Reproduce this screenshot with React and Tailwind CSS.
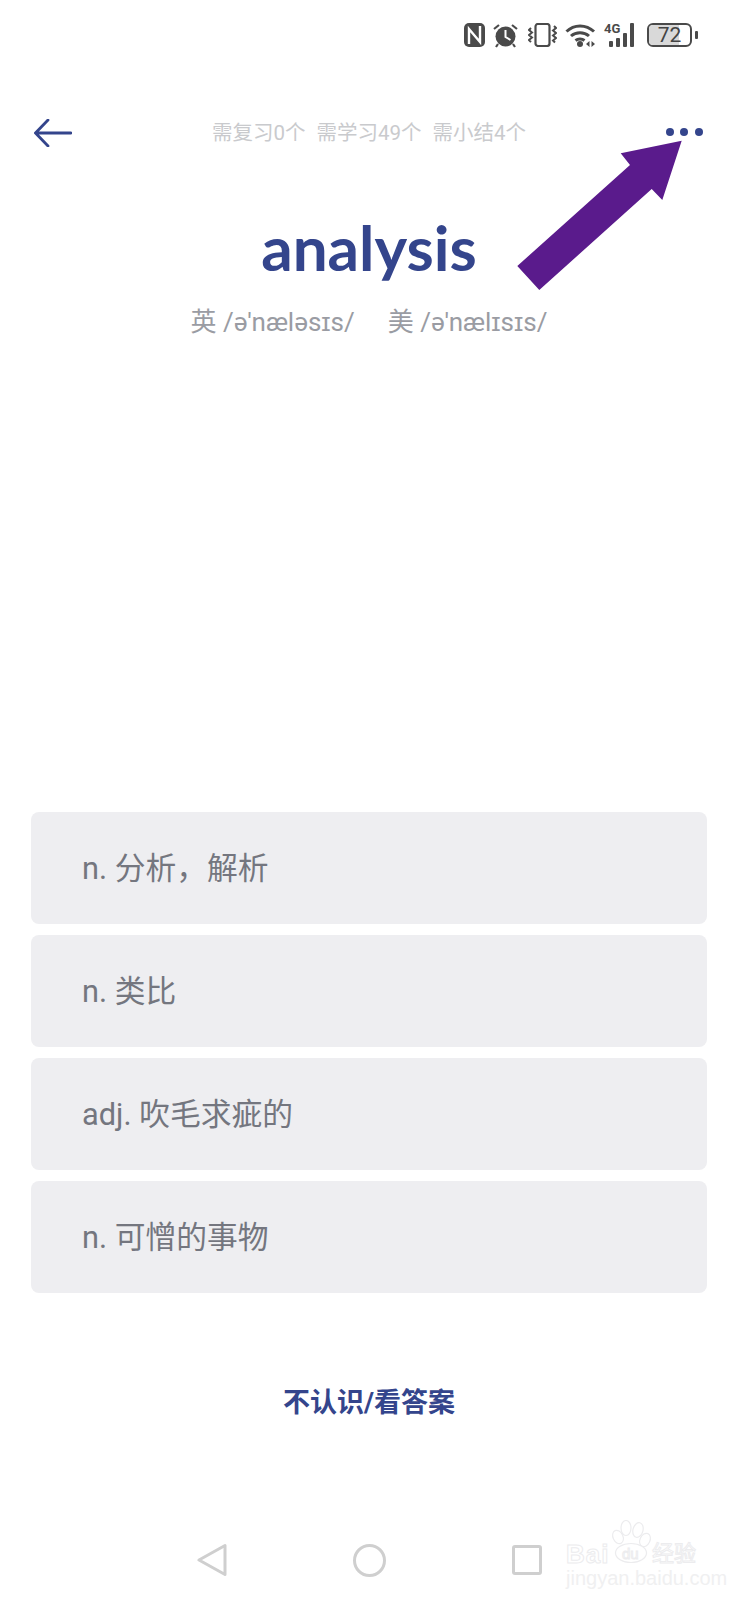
import React from "react";

const cjk = "font-['Roboto','Noto_Sans_CJK_SC',sans-serif]";

// Answer choices shown under the word
const options = ["n. 分析，解析", "n. 类比", "adj. 吹毛求疵的", "n. 可憎的事物"];

function StatusIcons() {
  return (
    <div className="flex items-center text-[#4a4a4a]">
      {/* NFC */}
      <svg width="22" height="24" viewBox="0 0 22 24" className="ml-[464px] shrink-0">
        <rect x="0" y="0" width="21" height="24" rx="5" fill="#4a4a4a" />
        <path d="M5 21V6l11 13V3" fill="none" stroke="#fff" strokeWidth="2.400" />
      </svg>
      {/* Alarm */}
      <svg width="25" height="25" viewBox="0 0 25 25" className="ml-[7px] shrink-0">
        <circle cx="12.500" cy="13.500" r="10" fill="#4a4a4a" />
        <path d="M12.500 7v7l5 3" fill="none" stroke="#fff" strokeWidth="2" />
        <path d="M1 6l5-4M24 6l-5-4M5 21l-2 3M20 21l2 3" stroke="#4a4a4a" strokeWidth="2.200" />
      </svg>
      {/* Vibrate */}
      <svg width="29" height="24" viewBox="0 0 29 24" className="ml-[10px] shrink-0">
        <rect x="7.500" y="1" width="14" height="22" rx="2.500" fill="none" stroke="#4a4a4a" strokeWidth="2.200" />
        <path d="M3 5l-2 2 3 2.500-3 2.500 3 2.500-3 2.500 2 2M26 3l2 2-3 2.500 3 2.500-3 2.500 3 2.500-3 2.500 2 2" fill="none" stroke="#4a4a4a" strokeWidth="2" />
      </svg>
      {/* Wifi */}
      <svg width="31" height="24" viewBox="0 0 31 24" className="ml-[8px] shrink-0">
        <path d="M1.500 8.500C9 1 21 1 29 8.500M6 13c5-4.500 13-4.500 18 0M10.500 17.500c2.500-2 6.500-2 9 0" fill="none" stroke="#4a4a4a" strokeWidth="3" />
        <circle cx="15" cy="21" r="3" fill="#4a4a4a" />
        <path d="M21 21l3.500-3v6zM30 21l-3.500-3v6z" fill="#4a4a4a" />
      </svg>
      {/* 4G signal */}
      <div className="relative ml-[8px] w-[35px] h-[24px] shrink-0 flex items-end gap-[3px] pl-[5px]">
        <span className="absolute left-0 top-[-1px] text-[13px] leading-[14px] font-bold font-['Roboto',sans-serif]">4G</span>
        <span className="w-[4px] h-[6px] bg-[#4a4a4a] rounded-[1px]" />
        <span className="w-[4px] h-[9px] bg-[#4a4a4a] rounded-[1px]" />
        <span className="w-[4px] h-[14px] bg-[#4a4a4a] rounded-[1px]" />
        <span className="w-[4px] h-[24px] bg-[#4a4a4a] rounded-[1px]" />
      </div>
      {/* Battery */}
      <div className="relative ml-[8px] w-[45px] h-[24px] shrink-0 rounded-[6px] border-2 border-[#4a4a4a] overflow-hidden flex items-center justify-center">
        <span className="absolute left-0 top-0 bottom-0 w-[72%] bg-[#d9d9d9]" />
        <span className="relative text-[21px] leading-none font-['Roboto',sans-serif] text-[#444]">72</span>
      </div>
      <span className="ml-[3px] w-[3px] h-[8px] bg-[#4a4a4a] rounded-[1px] shrink-0" />
    </div>
  );
}

function Watermark() {
  const outlined = "absolute leading-none text-white [-webkit-text-stroke:1px_#ececee]";
  return (
    <div className="absolute left-[566px] top-[1520px] w-[134px] h-[64px] font-['Liberation_Sans',sans-serif]">
      <svg width="134" height="44" viewBox="0 0 134 44" className="absolute left-0 top-0">
        <g fill="#fff" stroke="#ececee" strokeWidth="1.200">
          <ellipse cx="52" cy="17" rx="5" ry="7" transform="rotate(-25 52 17)" />
          <ellipse cx="60" cy="8" rx="5" ry="7.500" />
          <ellipse cx="72" cy="10" rx="5" ry="7.500" transform="rotate(15 72 10)" />
          <ellipse cx="79" cy="20" rx="5" ry="7" transform="rotate(25 79 20)" />
          <ellipse cx="65" cy="33" rx="15.500" ry="9.500" />
        </g>
      </svg>
      <span className={`${outlined} left-0 top-[21px] text-[26px] font-bold tracking-[1px]`}>Bai</span>
      <span className={`${outlined} left-[56px] top-[26px] text-[15px]`}>du</span>
      <span className={`${outlined} left-[86px] top-[20px] text-[22px] font-['Noto_Sans_CJK_SC',sans-serif]`}>经验</span>
      <span className="absolute left-0 top-[48px] text-[20px] leading-none whitespace-nowrap text-[#f0f0f1]">jingyan.baidu.com</span>
    </div>
  );
}

export default function App() {
  return (
    <div className={`relative w-[738px] h-[1600px] bg-white overflow-hidden flex flex-col ${cjk}`}>
      {/* Status bar */}
      <div className="h-[70px] flex items-center shrink-0">
        <StatusIcons />
      </div>

      {/* Header */}
      <div className="h-[124px] flex items-center justify-between pl-[34px] pr-[35px] shrink-0">
        <svg width="38" height="28" viewBox="0 0 38 28" fill="none" stroke="#34458c" strokeWidth="2.800" strokeLinecap="round" className="mt-[1px]">
          <path d="M37 14H2M14 1L1.500 14 14 27" />
        </svg>
        <div className="flex gap-[11px] text-[20.500px] leading-none text-[#c9cacd] pt-[2px]">
          <span>需复习0个</span>
          <span>需学习49个</span>
          <span>需小结4个</span>
        </div>
        <div className="flex gap-[6.500px]">
          <span className="w-[8px] h-[8px] rounded-full bg-[#34458c]" />
          <span className="w-[8px] h-[8px] rounded-full bg-[#34458c]" />
          <span className="w-[8px] h-[8px] rounded-full bg-[#34458c]" />
        </div>
      </div>

      {/* Word */}
      <div className="flex flex-col items-center shrink-0">
        <h1 className="text-[62px] leading-[68px] font-bold text-[#34458c] font-['Lato',sans-serif] mt-[19px]">analysis</h1>
        <div className="flex gap-[33px] text-[26px] leading-[36px] text-[#9a9ca3] mt-[23px]">
          <span>英 /ə'næləsɪs/</span>
          <span>美 /ə'nælɪsɪs/</span>
        </div>
      </div>

      {/* Options */}
      <div className="mt-[472px] mx-[31px] flex flex-col gap-[11px]">
        {options.map((o) => (
          <div key={o} className="h-[112px] rounded-[8px] bg-[#eeeef1] flex items-center pl-[51px] pt-[3px] text-[30.750px] text-[#74767f]">
            {o}
          </div>
        ))}
      </div>

      <div className="mt-[92px] text-center text-[27px] leading-[36px] font-bold text-[#34458c]">不认识/看答案</div>

      {/* Nav bar */}
      <div className="mt-auto h-[80px] flex items-center shrink-0">
        <div className="ml-[197px] flex items-center">
          <svg width="30" height="34" viewBox="0 0 30 34" fill="none" stroke="#cfcfcf" strokeWidth="3" strokeLinejoin="round">
            <path d="M28 2.500v29L2 17z" />
          </svg>
          <span className="ml-[126px] w-[33px] h-[33px] rounded-full border-[3px] border-[#cfcfcf]" />
          <span className="ml-[126px] w-[30px] h-[30px] rounded-[3px] border-[3px] border-[#cfcfcf]" />
        </div>
      </div>

      {/* Annotation arrow drawn over the screen */}
      <svg width="738" height="300" viewBox="0 0 738 300" className="absolute left-0 top-0 pointer-events-none">
        <path d="M681.700 140.700L620.700 153.300 630 165 517.300 266 539.300 290 651.700 189 662.300 200z" fill="#5a1b8c" />
      </svg>

      <Watermark />
    </div>
  );
}
